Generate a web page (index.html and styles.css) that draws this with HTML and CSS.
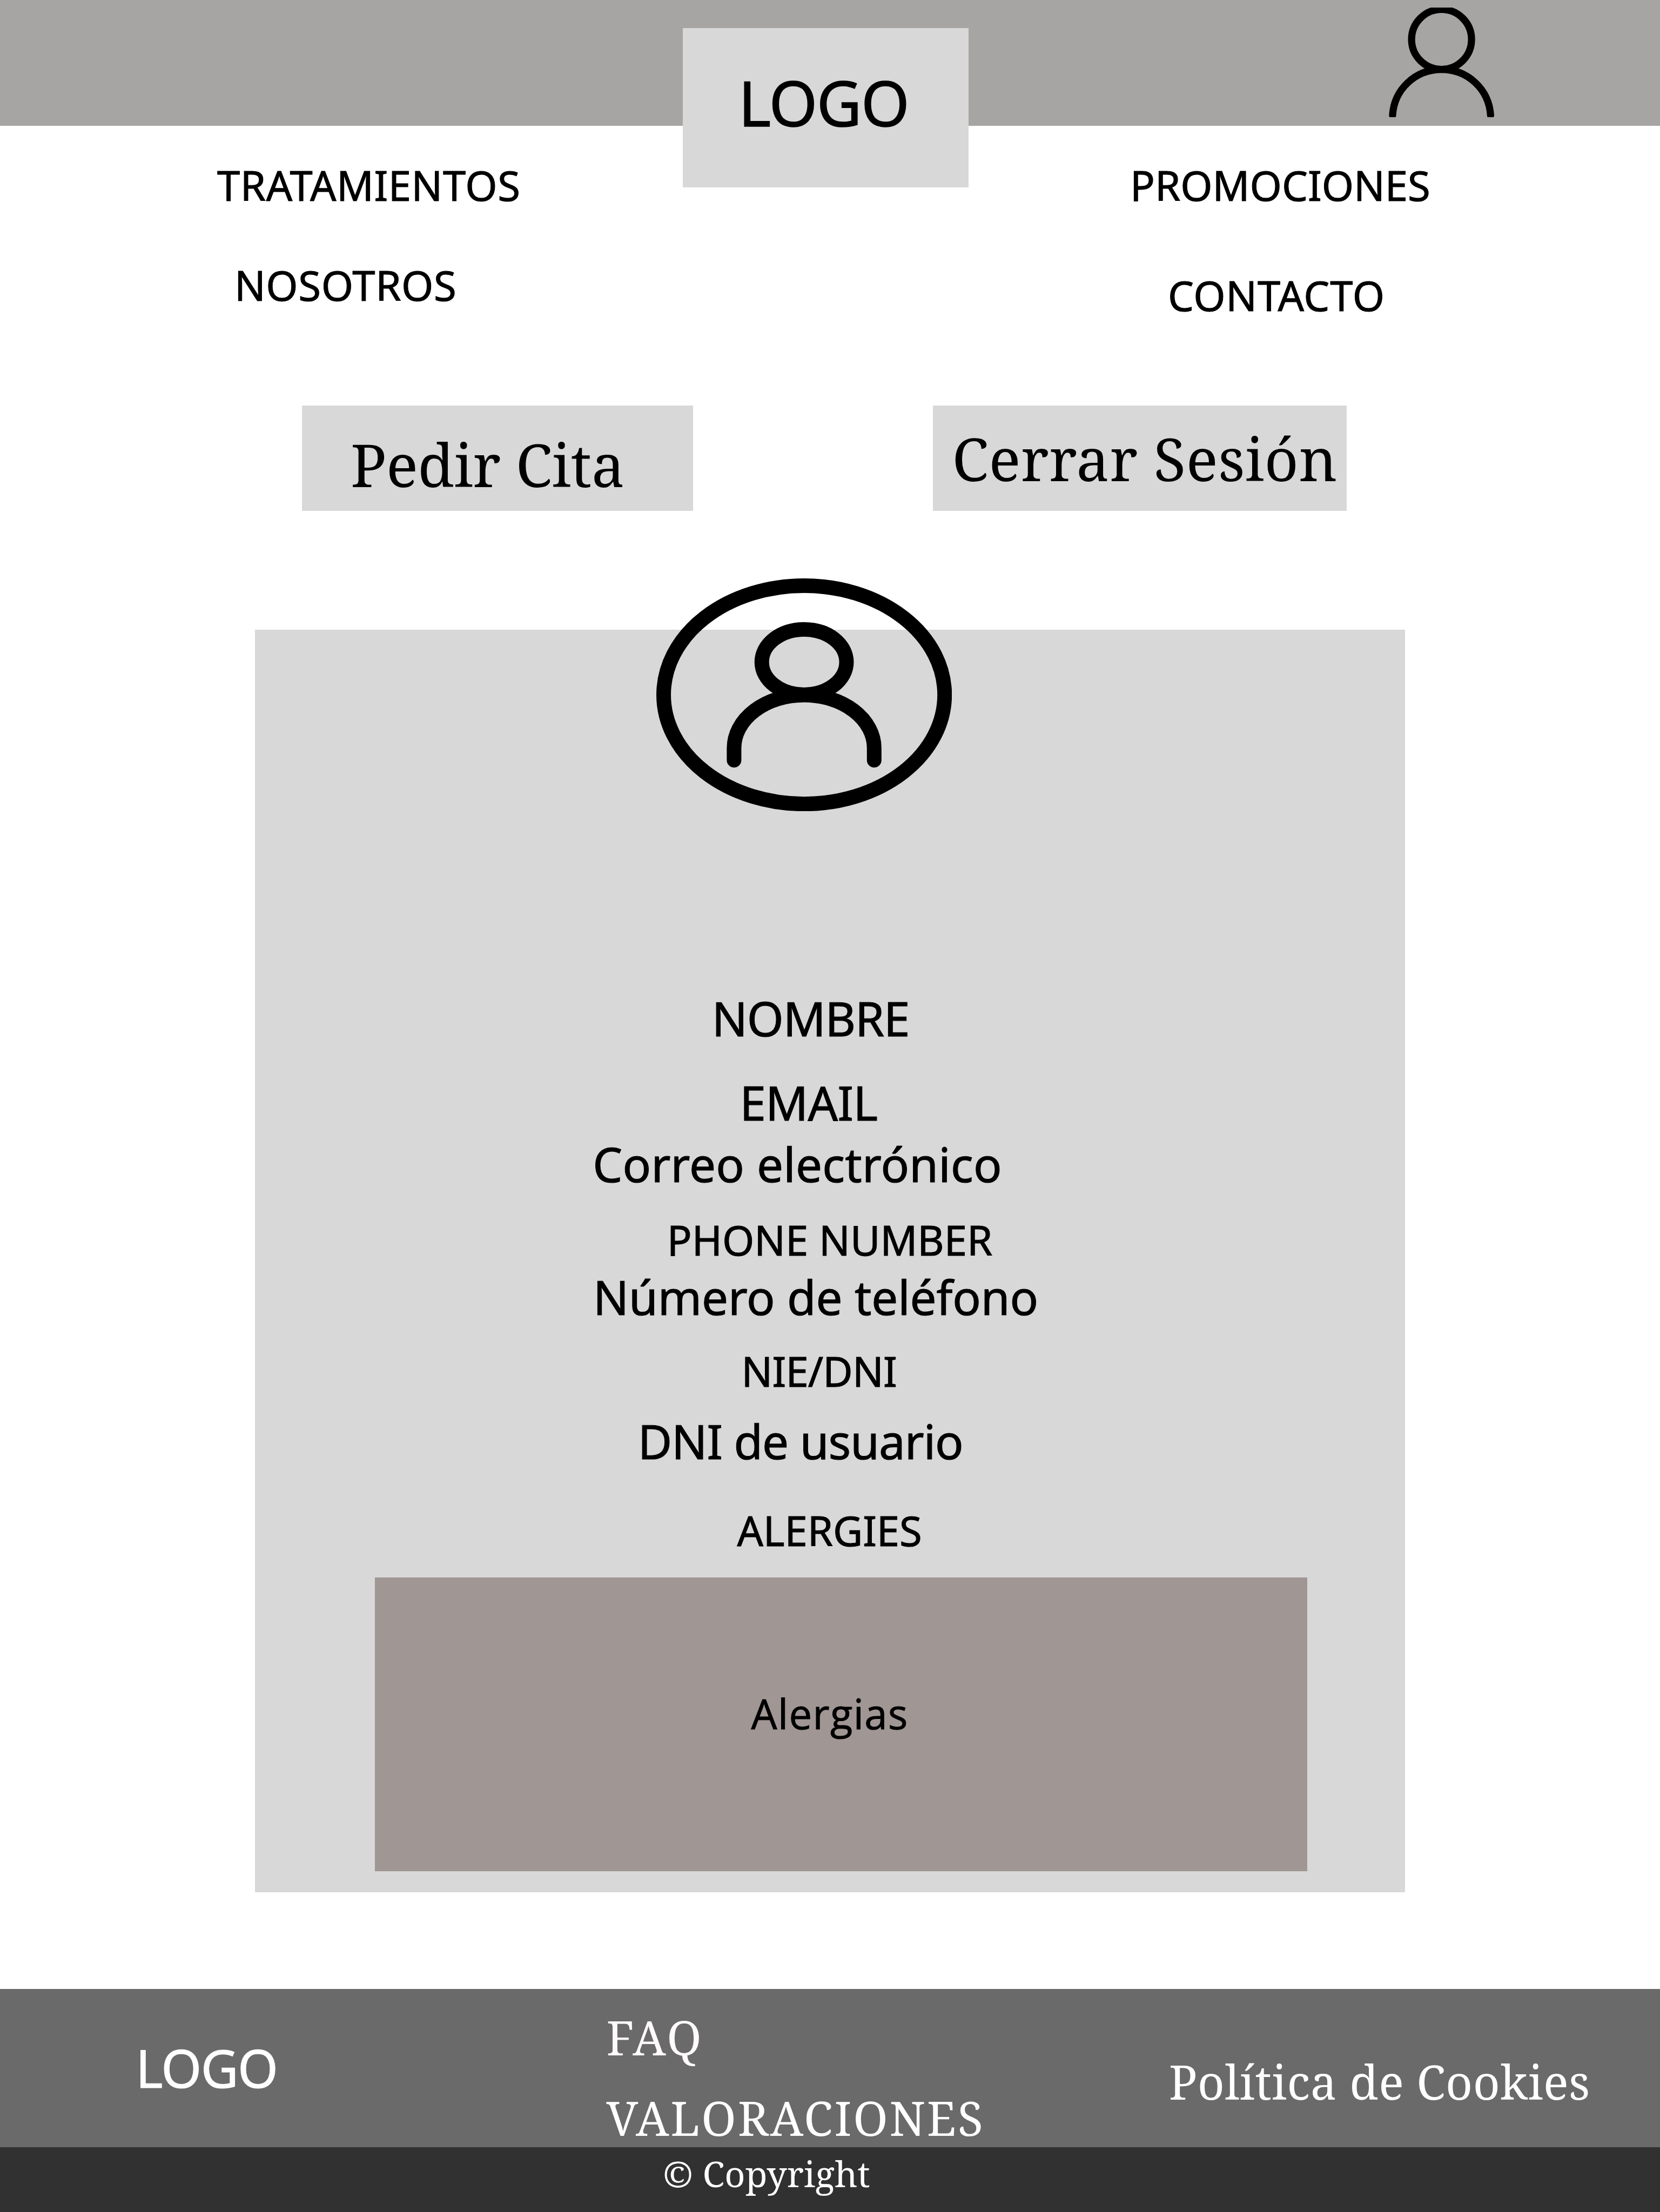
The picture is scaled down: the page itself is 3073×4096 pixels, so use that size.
FILE: index.html
```html
<!DOCTYPE html>
<html lang="es">
<head>
<meta charset="utf-8">
<title>Perfil de usuario</title>
<link rel="stylesheet" href="styles.css">
</head>
<body>
<header class="topbar">
  <div class="logo"><span class="logo-text">LOGO</span></div>
  <svg class="user-icon" viewBox="2570 13.7 197 203.7" fill="none" stroke="#000" stroke-width="13.2">
    <circle cx="2668.6" cy="72.7" r="55.5"/>
    <path stroke-linecap="round" d="M2577.9 213.2C2581 165 2620 128.4 2668.6 128.4S2756.2 165 2759.4 213.2"/>
  </svg>
</header>

<nav class="menu">
  <div class="menu-col">
    <a class="label tratamientos">TRATAMIENTOS</a>
    <a class="label nosotros">NOSOTROS</a>
  </div>
  <div class="menu-col menu-col-right">
    <a class="label promociones">PROMOCIONES</a>
    <a class="label contacto">CONTACTO</a>
  </div>
</nav>

<main>
  <div class="actions">
    <div class="button pedir"><span class="pedir-text">Pedir Cita</span></div>
    <div class="button cerrar"><span class="cerrar-text">Cerrar Sesión</span></div>
  </div>

  <section class="profile">
    <svg class="avatar" viewBox="1216.9 1071.1 547.3 431.2" fill="none" stroke="#000" stroke-width="27">
      <ellipse cx="1490.5" cy="1286.7" rx="260.1" ry="202.1"/>
      <ellipse cx="1490.5" cy="1226" rx="78.4" ry="60.5"/>
      <path stroke-linecap="round" d="M1360.8 1407.8V1385.2A129.7 98.2 0 0 1 1620.2 1385.2V1407.8"/>
    </svg>
    <div class="field nombre">NOMBRE</div>
    <div class="field email">EMAIL</div>
    <div class="field correo">Correo electrónico</div>
    <div class="label phone">PHONE NUMBER</div>
    <div class="field telefono">Número de teléfono</div>
    <div class="label nie">NIE/DNI</div>
    <div class="field dni">DNI de usuario</div>
    <div class="label alergies">ALERGIES</div>
    <div class="allergy-box"><span class="label allergy-text">Alergias</span></div>
  </section>
</main>

<footer>
  <div class="footer-main">
    <div class="footer-logo">LOGO</div>
    <div class="footer-links">
      <a class="faq">FAQ</a>
      <a class="valoraciones">VALORACIONES</a>
    </div>
    <a class="cookies">Política de Cookies</a>
  </div>
  <div class="copyright">© Copyright</div>
</footer>
</body>
</html>
```
FILE: styles.css
```css
* { box-sizing: border-box; }
html, body { margin: 0; }
body {
  width: 3073px;
  height: 4096px;
  overflow: hidden;
  background: #fff;
  color: #000;
  font-family: "Noto Sans", "Open Sans", sans-serif;
  line-height: 100px;
  white-space: nowrap;
}

/* Header */
.topbar {
  display: flex;
  align-items: flex-start;
  height: 233.3px;
  padding-left: 1264.3px;
  background: #a6a5a3;
}
.logo {
  flex: none;
  width: 528.7px;
  height: 295.5px;
  margin-top: 51.5px;
  padding: 88.2px 0 0 102.8px;
  background: #d8d8d8;
}
.logo-text { display: block; font-size: 115px; letter-spacing: -1.5px; -webkit-text-stroke: 1.4px; }
.user-icon { flex: none; width: 197px; height: 203.7px; margin: 13.7px 0 0 777px; }

/* Menu */
.menu { display: grid; grid-template-columns: 1536px 1537px; height: 517.8px; }
.menu-col { display: flex; flex-direction: column; gap: 84.3px; padding: 60px 0 0 1px; }
.menu-col-right { gap: 103.8px; }
.label { font-size: 76px; -webkit-text-stroke: 1px; }
.tratamientos { margin-left: 401px; letter-spacing: 0.55px; }
.nosotros { margin-left: 433px; letter-spacing: 0.6px; }
.promociones { margin-left: 555px; }
.contacto { margin-left: 625px; letter-spacing: 0.75px; }

/* Actions */
.actions {
  display: flex;
  gap: 443.8px;
  height: 195.4px;
  margin-bottom: 219.6px;
  padding-left: 558.6px;
  font-family: "Noto Serif", "Liberation Serif", serif;
  font-size: 110px;
}
.button { background: #d8d8d8; }
.button span { display: block; }
.pedir { width: 724.5px; padding: 58px 0 0 90.4px; }
.pedir-text { letter-spacing: -0.45px; }
.cerrar { width: 765.7px; padding: 47px 0 0 35.6px; }
.cerrar-text { letter-spacing: 0.4px; }

/* Profile card */
.profile {
  position: relative;
  display: flex;
  flex-direction: column;
  align-items: flex-start;
  width: 2129px;
  height: 2338.2px;
  margin-left: 472.1px;
  padding: 669px 0 0 1px;
  background: #d8d8d8;
}
.avatar { position: absolute; left: 742.9px; top: -95px; width: 547.3px; height: 431.2px; }
.field { font-size: 87px; -webkit-text-stroke: 1.1px; }
.nombre { margin-left: 844.7px; letter-spacing: -1.1px; }
.email { margin: 55.9px 0 0 896.4px; letter-spacing: -0.6px; }
.correo { margin: 13.7px 0 0 624.2px; letter-spacing: 0.24px; }
.phone { margin: 41.2px 0 0 761.6px; }
.telefono { margin: 5.1px 0 0 624.9px; letter-spacing: -0.1px; }
.nie { margin: 38.4px 0 0 899.4px; letter-spacing: -0.8px; }
.dni { margin: 29.1px 0 0 707.7px; letter-spacing: -1px; }
.alergies { margin: 65.9px 0 0 891.3px; letter-spacing: -0.1px; }
.allergy-box {
  width: 1726.2px;
  height: 543.8px;
  margin: 36.8px 0 0 221.1px;
  padding: 202.3px 0 0 696.3px;
  background: #a09694;
}
.allergy-text { display: block; font-family: "Open Sans", sans-serif; letter-spacing: 1.4px; }

/* Footer */
footer { margin-top: 179px; color: #fff; font-family: "Noto Serif", "Liberation Serif", serif; }
.footer-main {
  display: grid;
  grid-template-columns: 1122px 1041.8px 1fr;
  height: 292.9px;
  background: #6a6a6a;
  font-size: 87px;
}
.footer-logo {
  padding: 95.5px 0 0 251.3px;
  font-family: "Noto Sans", sans-serif;
  font-size: 96px;
  letter-spacing: -1.5px;
  -webkit-text-stroke: 1px;
}
.footer-links { display: flex; flex-direction: column; gap: 49.2px; padding: 39px 0 0 0.5px; }
.faq { color: #fffafa; letter-spacing: 3.4px; }
.valoraciones { letter-spacing: 2.85px; }
.cookies { padding-top: 120.5px; letter-spacing: 0.45px; }
.copyright {
  height: 119.8px;
  padding: 2.4px 0 0 1227px;
  background: #313131;
  font-size: 66.5px;
  line-height: 90px;
}
```
